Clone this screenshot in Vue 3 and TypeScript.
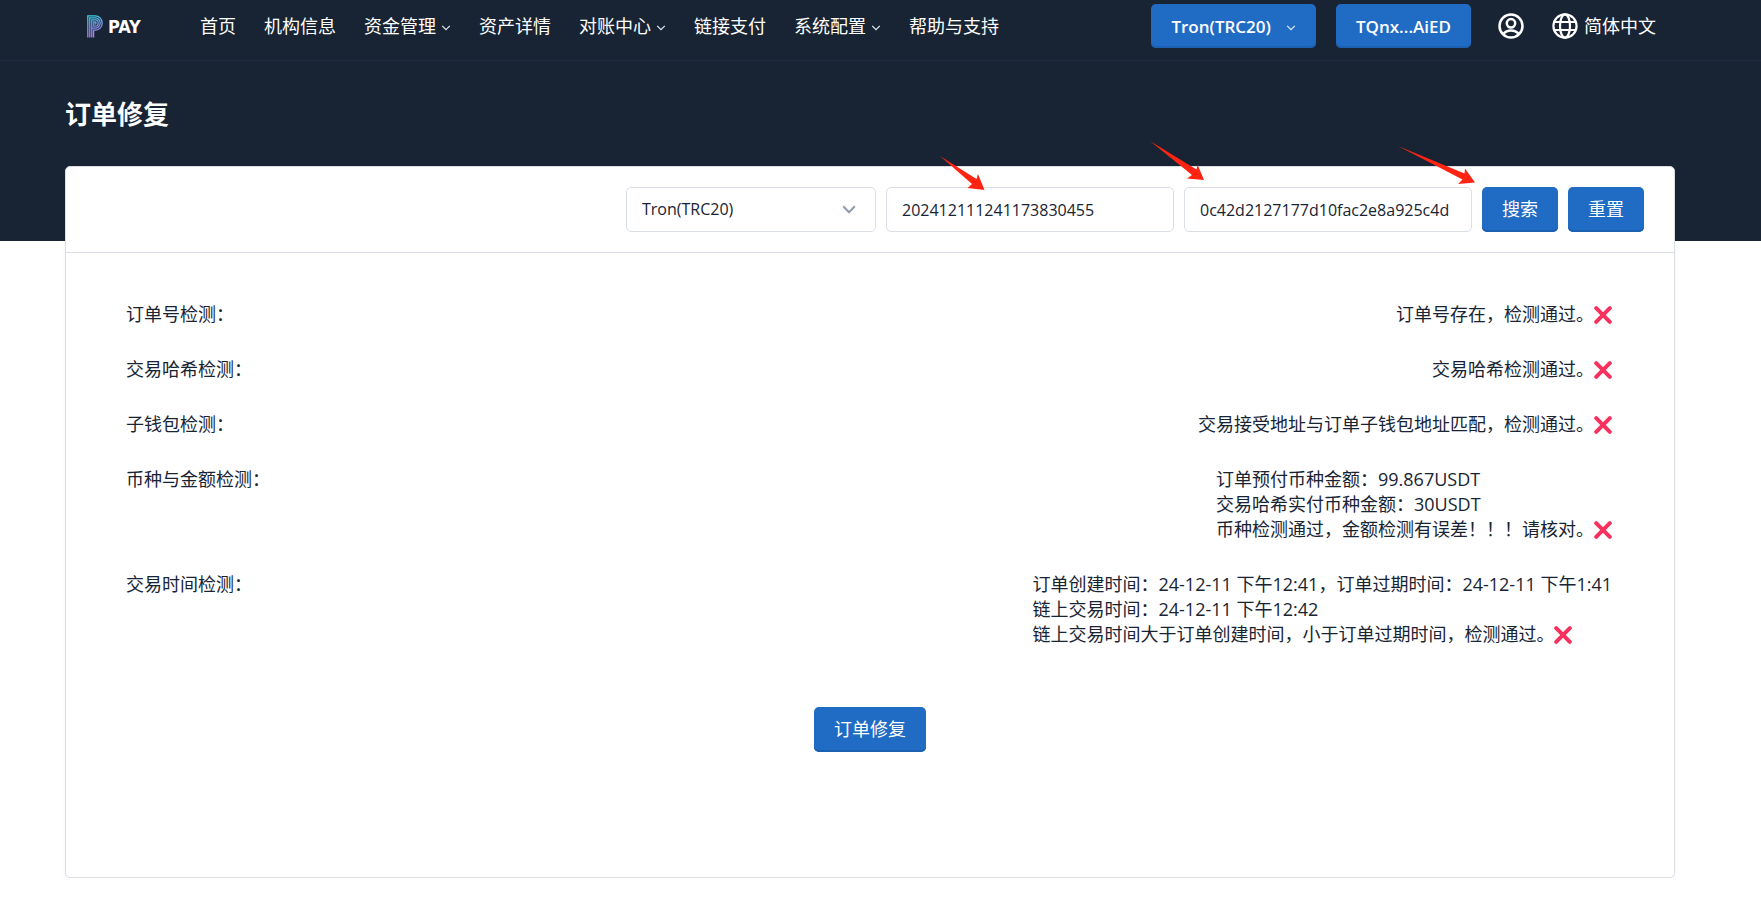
<script setup lang="ts">
import { ref } from 'vue'

interface NavItem {
  label: string
  menu: boolean
}

interface CheckRow {
  label: string
  lines: string[]
}

const navItems: NavItem[] = [
  { label: '首页', menu: false },
  { label: '机构信息', menu: false },
  { label: '资金管理', menu: true },
  { label: '资产详情', menu: false },
  { label: '对账中心', menu: true },
  { label: '链接支付', menu: false },
  { label: '系统配置', menu: true },
  { label: '帮助与支持', menu: false },
]

const checks: CheckRow[] = [
  { label: '订单号检测：', lines: ['订单号存在，检测通过。'] },
  { label: '交易哈希检测：', lines: ['交易哈希检测通过。'] },
  { label: '子钱包检测：', lines: ['交易接受地址与订单子钱包地址匹配，检测通过。'] },
  {
    label: '币种与金额检测：',
    lines: [
      '订单预付币种金额：99.867USDT',
      '交易哈希实付币种金额：30USDT',
      '币种检测通过，金额检测有误差！！！请核对。',
    ],
  },
  {
    label: '交易时间检测：',
    lines: [
      '订单创建时间：24-12-11 下午12:41，订单过期时间：24-12-11 下午1:41',
      '链上交易时间：24-12-11 下午12:42',
      '链上交易时间大于订单创建时间，小于订单过期时间，检测通过。',
    ],
  },
]

const network = ref('Tron(TRC20)')
const orderNo = ref('202412111241173830455')
const txHash = ref('0c42d2127177d10fac2e8a925c4d')

function reset(): void {
  orderNo.value = ''
  txHash.value = ''
}
</script>

<template>
  <div class="page">
    <header class="topbar">
      <div class="container topbar-inner">
        <a class="logo" href="#" aria-label="PAY">
          <svg class="logo-mark" viewBox="0 0 16 23" aria-hidden="true">
            <defs>
              <linearGradient id="logo-grad" gradientUnits="userSpaceOnUse" x1="2" y1="0" x2="6" y2="23">
                <stop offset="0" stop-color="#35d6e6" />
                <stop offset="0.5" stop-color="#7d93e8" />
                <stop offset="1" stop-color="#b57bf0" />
              </linearGradient>
            </defs>
            <g fill="none" stroke="url(#logo-grad)" stroke-width="1.3">
              <path d="M.8 22.5V.8H8a7 7 0 0 1 0 14.4H6.6v7.3" />
              <path d="M2.8 22.5V2.8H8a5 5 0 0 1 0 10.4H4.8v9.3" />
              <path d="M4.8 13V4.8H8a3.1 3.1 0 0 1 0 6.4H6.8V7H8a1 1 0 0 1 0 2.2" />
            </g>
          </svg>
          <span class="logo-text">PAY</span>
        </a>
        <nav class="nav">
          <a v-for="item in navItems" :key="item.label" class="nav-link" href="#">
            {{ item.label }}
            <svg v-if="item.menu" class="caret" viewBox="0 0 9 6" aria-hidden="true">
              <path d="M.7 .9 4.5 4.7 8.3 .9" />
            </svg>
          </a>
        </nav>
        <div class="tools">
          <button class="btn btn-strong" type="button">
            Tron(TRC20)
            <svg class="caret" viewBox="0 0 9 6" aria-hidden="true">
              <path d="M.7 .9 4.5 4.7 8.3 .9" />
            </svg>
          </button>
          <button class="btn btn-strong" type="button">TQnx...AiED</button>
          <button class="icon-btn account" type="button" aria-label="账户">
            <svg viewBox="0 0 26 26" aria-hidden="true">
              <g fill="none" stroke="#fff" stroke-width="2.5">
                <circle cx="13" cy="13" r="11.5" />
                <circle cx="13" cy="10.3" r="4.2" />
                <path d="M5.2 21c2-2.4 4.700-3.500 7.800-3.500s5.800 1.100 7.800 3.500" />
              </g>
            </svg>
          </button>
          <button class="icon-btn" type="button">
            <svg viewBox="0 0 26 26" aria-hidden="true">
              <g fill="none" stroke="#fff" stroke-width="2.2">
                <circle cx="13" cy="13" r="11.6" />
                <ellipse cx="13" cy="13" rx="5" ry="11.600" />
                <path d="M2 9h22M2 17h22" />
              </g>
            </svg>
            简体中文
          </button>
        </div>
      </div>
    </header>

    <section class="banner">
      <div class="container">
        <h1 class="title">订单修复</h1>
      </div>
    </section>

    <main class="container">
      <div class="card">
        <form class="filters" @submit.prevent>
          <div class="field field-select">
            <select v-model="network" class="control" aria-label="网络">
              <option>Tron(TRC20)</option>
            </select>
            <svg class="select-caret" viewBox="0 0 14 9" aria-hidden="true">
              <path d="M1.200 1.200 7 7.200 12.800 1.200" />
            </svg>
          </div>
          <div class="field field-text">
            <input v-model="orderNo" class="control" type="text" aria-label="订单号" />
            <svg class="arrow arrow-order" width="46" height="36" viewBox="0 0 46 36" aria-hidden="true">
              <path d="M0 0 36.500 23 38 18 44.500 34 27.500 32 32 28Z" />
            </svg>
          </div>
          <div class="field field-text">
            <input v-model="txHash" class="control" type="text" aria-label="交易哈希" />
            <svg class="arrow arrow-hash" width="56" height="42" viewBox="0 0 56 42" aria-hidden="true">
              <path d="M0 0 46.500 28.500 47.500 23.500 54 39 37 37.500 42 34Z" />
            </svg>
          </div>
          <div class="field">
            <button class="btn" type="submit">搜索</button>
            <svg class="arrow arrow-search" width="78" height="40" viewBox="0 0 78 40" aria-hidden="true">
              <path d="M0 0 66.500 27.500 67 22.500 77 36.500 60 38 64.500 33.500Z" />
            </svg>
          </div>
          <button class="btn" type="button" @click="reset">重置</button>
        </form>

        <dl class="checks">
          <div v-for="row in checks" :key="row.label" class="check">
            <dt>{{ row.label }}</dt>
            <dd>
              <div v-for="(line, i) in row.lines" :key="i" class="line">
                <span>{{ line }}</span>
                <svg v-if="i === row.lines.length - 1" class="cross" viewBox="0 0 18 18" role="img" aria-label="未通过">
                  <path d="M2.200 2.200 15.800 15.800M15.800 2.200 2.200 15.800" />
                </svg>
              </div>
            </dd>
          </div>
        </dl>

        <div class="actions">
          <button class="btn" type="button">订单修复</button>
        </div>
      </div>
    </main>
  </div>
</template>

<style>
body {
  margin: 0;
  background: #fff;
}
</style>

<style scoped>
.page {
  font-family: 'Open Sans', 'Noto Sans CJK SC', sans-serif;
  font-size: 18px;
  line-height: 25px;
  color: #182433;
}

.page * {
  box-sizing: border-box;
}

.container {
  margin-left: 65px;
  margin-right: 86px;
}

.topbar {
  background: #182433;
  border-bottom: 1px solid #202f40;
}

.topbar-inner {
  display: flex;
  align-items: center;
  height: 60px;
  padding: 0 19px 8px 22px;
}

.logo {
  display: flex;
  align-items: center;
  gap: 5px;
  width: 113px;
  color: #fff;
  text-decoration: none;
}

.logo-mark {
  width: 16px;
  height: 23px;
}

.logo-text {
  font-family: 'DejaVu Sans Condensed', 'Open Sans', sans-serif;
  font-size: 18px;
  font-weight: 700;
}

.nav {
  display: flex;
  flex: 1;
  gap: 28px;
}

.nav-link {
  display: flex;
  align-items: center;
  gap: 5px;
  color: #fff;
  text-decoration: none;
  white-space: nowrap;
}

.caret {
  width: 10px;
  height: 6px;
  margin-top: 3px;
  fill: none;
  stroke: #dfe4ea;
  stroke-width: 1.3;
}

.tools {
  display: flex;
  align-items: center;
}

.btn {
  display: flex;
  align-items: center;
  height: 45px;
  padding: 0 20px;
  border: 0;
  border-radius: 5px;
  background: #206bc4;
  box-shadow: inset 0 -2px 0 #1c60b2;
  color: #fff;
  font: inherit;
  white-space: nowrap;
}

.btn-strong {
  height: 44px;
  margin-right: 20px;
  font-size: 17px;
  font-weight: 600;
}

.btn-strong .caret {
  margin-left: 15px;
}

.icon-btn {
  display: flex;
  align-items: center;
  gap: 6px;
  padding: 0;
  border: 0;
  background: none;
  color: #fff;
  font: inherit;
  white-space: nowrap;
}

.icon-btn svg {
  width: 26px;
  height: 26px;
}

.account {
  margin: 0 28px 0 7px;
}

.banner {
  height: 180px;
  margin-bottom: -75px;
  padding-top: 37px;
  background: #182433;
}

.title {
  margin: 0;
  color: #fff;
  font-size: 26px;
  font-weight: 700;
  line-height: 32px;
}

.card {
  position: relative;
  border: 1px solid #dadfe5;
  border-radius: 5px;
  background: #fff;
  box-shadow: 0 2px 4px rgba(24, 36, 51, 0.04);
}

.filters {
  display: flex;
  justify-content: flex-end;
  gap: 10px;
  padding: 20px 30px;
  border-bottom: 1px solid #dadfe5;
}

.field {
  position: relative;
}

.field-select {
  width: 250px;
}

.field-text {
  width: 288px;
}

.control {
  display: block;
  width: 100%;
  height: 45px;
  padding: 0 15px;
  border: 1px solid #dadfe5;
  border-radius: 5px;
  background: #fff;
  color: #182433;
  font: inherit;
  font-size: 16px;
  appearance: none;
}

.select-caret {
  position: absolute;
  top: 18px;
  right: 20px;
  width: 14px;
  height: 9px;
  fill: none;
  stroke: #929dab;
  stroke-width: 2;
  pointer-events: none;
}

.arrow {
  position: absolute;
  z-index: 1;
  fill: #ff2412;
  pointer-events: none;
}

.arrow-order {
  top: -31px;
  left: 54px;
}

.arrow-hash {
  top: -46px;
  left: -34px;
}

.arrow-search {
  top: -41px;
  left: -84px;
}

.checks {
  display: flex;
  flex-direction: column;
  gap: 30px;
  margin: 0;
  padding: 49px 60px 0;
}

.check {
  display: flex;
  justify-content: space-between;
}

.check dd {
  margin: 0;
}

.line {
  display: flex;
  align-items: center;
  padding-right: 2px;
  white-space: nowrap;
}

.cross {
  width: 18px;
  height: 18px;
  fill: none;
  stroke: #f8315f;
  stroke-width: 4;
  stroke-linecap: round;
}

.actions {
  display: flex;
  justify-content: center;
  padding: 60px 0 125px;
}
</style>
